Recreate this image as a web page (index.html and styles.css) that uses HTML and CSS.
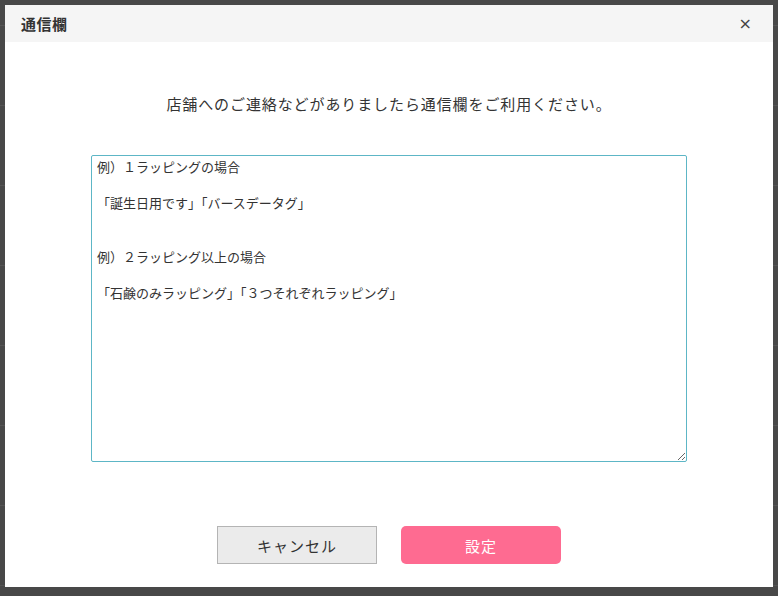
FILE: index.html
```html
<!DOCTYPE html>
<html lang="ja">
<head>
<meta charset="utf-8">
<title>通信欄</title>
<link rel="stylesheet" href="styles.css">
</head>
<body>
<div class="backdrop">
  <div class="bg-page">
    <div class="bg-row bg-top"></div>
    <div class="bg-row"></div>
    <div class="bg-row"></div>
    <div class="bg-row"></div>
    <div class="bg-row"></div>
    <div class="bg-row"></div>
    <div class="bg-row"></div>
    <div class="bg-row"></div>
  </div>
  <div class="modal">
    <div class="modal-header">
      <h2 class="modal-title">通信欄</h2>
      <span class="modal-close">×</span>
    </div>
    <div class="modal-body">
      <p class="lead">店舗へのご連絡などがありましたら通信欄をご利用ください。</p>
      <textarea class="memo">例）１ラッピングの場合

「誕生日用です」「バースデータグ」


例）２ラッピング以上の場合

「石鹸のみラッピング」「３つそれぞれラッピング」</textarea>
      <div class="actions">
        <button class="btn btn-cancel">キャンセル</button>
        <button class="btn btn-ok">設定</button>
      </div>
    </div>
  </div>
</div>
</body>
</html>
```

FILE: styles.css
```css
* { box-sizing: border-box; }
html, body {
  margin: 0;
  padding: 0;
  width: 778px;
  height: 596px;
  overflow: hidden;
  background: #484848;
  font-family: "Noto Sans CJK JP", "Noto Sans", sans-serif;
  color: #333;
}
.backdrop {
  position: relative;
  width: 778px;
  height: 596px;
  background: #484848;
}
.bg-page {
  position: absolute;
  inset: 0;
}
.bg-row {
  height: 80px;
  border-bottom: 1px solid #555;
}
.bg-top {
  height: 26px;
}
.modal {
  position: absolute;
  left: 5px;
  top: 5px;
  width: 768px;
  height: 582px;
  background: #fff;
  display: flex;
  flex-direction: column;
}
.modal-header {
  height: 37px;
  background: #f5f5f5;
  display: flex;
  align-items: center;
  justify-content: space-between;
  padding: 0 21px 0 16px;
}
.modal-title {
  margin: 0;
  font-size: 15px;
  font-weight: bold;
  color: #333;
  line-height: 20px;
  letter-spacing: 0.5px;
}
.modal-close {
  font-family: "DejaVu Sans", sans-serif;
  font-size: 16px;
  color: #444;
  line-height: 16px;
}
.modal-body {
  display: flex;
  flex-direction: column;
  align-items: center;
  padding-top: 51px;
}
.lead {
  margin: 0;
  font-size: 15px;
  line-height: 22px;
  letter-spacing: 0.9px;
  color: #333;
}
.memo {
  margin-top: 40px;
  width: 596px;
  height: 307px;
  border: 1px solid #5db6c6;
  border-radius: 2px;
  padding: 2px 5px;
  font-family: "Noto Sans CJK JP", "Noto Sans", sans-serif;
  font-size: 13px;
  line-height: 18px;
  color: #333;
  resize: both;
  outline: none;
}
.actions {
  margin-top: 64px;
  display: flex;
  gap: 24px;
}
.btn {
  width: 160px;
  height: 38px;
  font-family: "Noto Sans CJK JP", "Noto Sans", sans-serif;
  font-size: 15px;
  letter-spacing: 1px;
  cursor: pointer;
}
.btn-cancel {
  background: #ebebeb;
  border: 1px solid #b4b4b4;
  color: #333;
  border-radius: 0;
}
.btn-ok {
  background: #fe6b91;
  border: none;
  border-radius: 5px;
  color: #fff;
}
```
